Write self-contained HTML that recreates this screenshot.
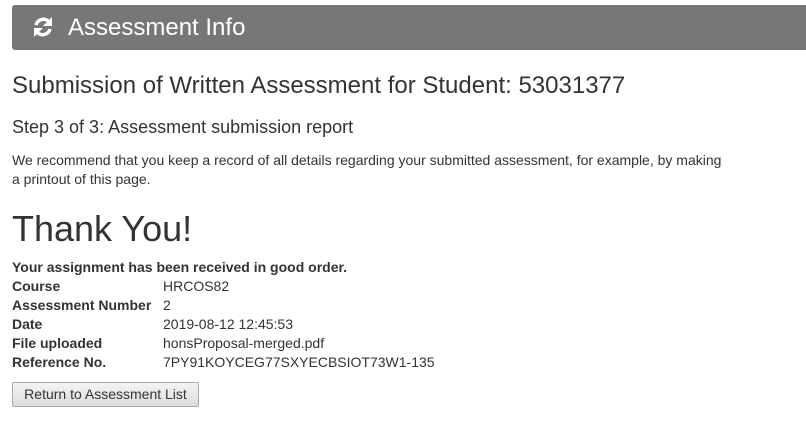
<!DOCTYPE html>
<html><head><style>
body{margin:0;width:806px;height:428px;background:#fff;font-family:"Liberation Sans",sans-serif;color:#333;position:relative;overflow:hidden}
.bar{position:absolute;left:12px;top:5px;width:800px;height:45px;background:#777;border-radius:3px 0 0 3px}
.bar svg{position:absolute;left:20px;top:11px}
.bar span{position:absolute;left:56px;top:9px;color:#fff;font-size:24px}
.a{position:absolute;left:12px;white-space:nowrap}
table{position:absolute;left:12px;top:258px;border-collapse:collapse;font-size:14px}
td{padding:0;height:19px;line-height:19px}
td:first-child{font-weight:bold;width:151px}
.btn{position:absolute;left:12px;top:382px;width:185px;height:23px;border:1px solid #aaa;border-radius:2px;background:linear-gradient(#f4f4f4,#ddd);font-size:14px;text-align:center;line-height:23px;color:#333}
</style></head><body>
<div class="bar">
<svg width="22" height="22" viewBox="0 0 22 22"><path d="M4 9 A7.5 7.5 0 0 1 17 6" stroke="#fff" stroke-width="3.5" fill="none"/><path d="M20 1 L20 10 L11 10 Z" fill="#fff"/><path d="M18 13 A7.5 7.5 0 0 1 5 16" stroke="#fff" stroke-width="3.5" fill="none"/><path d="M2 21 L2 12 L11 12 Z" fill="#fff"/></svg>
<span>Assessment Info</span></div>
<div class="a" style="top:72px;font-size:24px">Submission of Written Assessment for Student: 53031377</div>
<div class="a" style="top:117px;font-size:18px">Step 3 of 3: Assessment submission report</div>
<div class="a" style="top:151px;font-size:14px;line-height:19px">We recommend that you keep a record of all details regarding your submitted assessment, for example, by making<br>a printout of this page.</div>
<div class="a" style="top:208px;font-size:36px">Thank You!</div>
<table>
<tr><td colspan="2">Your assignment has been received in good order.</td></tr>
<tr><td>Course</td><td>HRCOS82</td></tr>
<tr><td>Assessment Number</td><td>2</td></tr>
<tr><td>Date</td><td>2019-08-12 12:45:53</td></tr>
<tr><td>File uploaded</td><td>honsProposal-merged.pdf</td></tr>
<tr><td>Reference No.</td><td>7PY91KOYCEG77SXYECBSIOT73W1-135</td></tr>
</table>
<div class="btn">Return to Assessment List</div>
</body></html>
